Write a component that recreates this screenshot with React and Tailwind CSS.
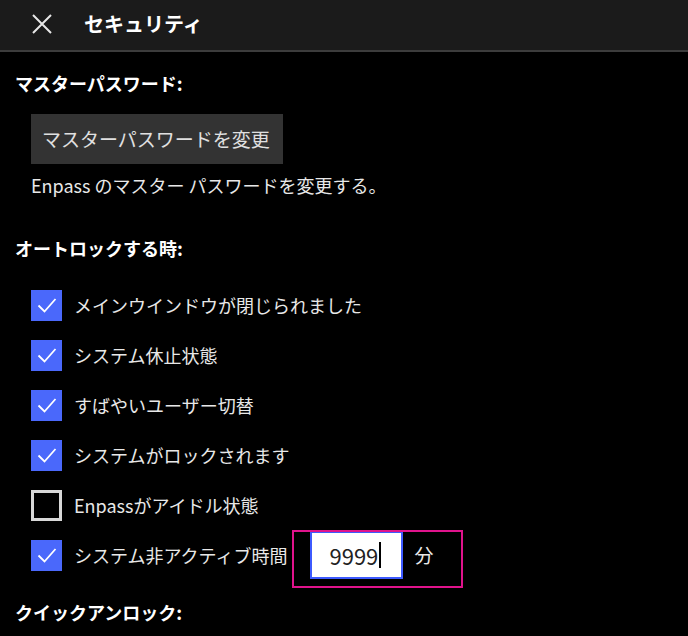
import React from 'react';

const FONT = { fontFamily: '"Noto Sans CJK JP", "Noto Sans", sans-serif' };

const Check = ({ checked }) => (
  checked ? (
    <div className="w-[31px] h-[31px] bg-[#4a68fb] flex items-center justify-center shrink-0">
      <svg width="22" height="22" viewBox="0 0 22 22" fill="none">
        <path d="M2.5 11.5 L8.5 17.5 L19.5 5" stroke="white" strokeWidth="1.8" />
      </svg>
    </div>
  ) : (
    <div className="w-[31px] h-[31px] border-[3px] border-[#d8d8d8] shrink-0" />
  )
);

const Row = ({ checked, children }) => (
  <div className="flex items-center h-[50px]">
    <Check checked={checked} />
    <span className="ml-[12px] text-[18px] text-[#e8e8e8]">{children}</span>
  </div>
);

export default function App() {
  return (
    <div className="w-[688px] h-[636px] bg-black overflow-hidden text-white" style={FONT}>
      <div className="h-[52px] bg-[#1b1b1b] border-b-[2px] border-[#3c3c3c] flex items-center">
        <svg className="ml-[31px] mb-[2px]" width="22" height="22" viewBox="0 0 22 22" fill="none">
          <path d="M2 2 L20 20 M20 2 L2 20" stroke="#e8e8e8" strokeWidth="2" />
        </svg>
        <span className="ml-[31px] mb-[2px] text-[20px] font-bold text-white">セキュリティ</span>
      </div>

      <div className="pl-[15px]">
        <div className="mt-[18px] text-[18px] font-bold leading-[26px]">マスターパスワード:</div>
        <div className="ml-[16px] mt-[18px]">
          <div className="w-[252px] h-[50px] bg-[#333333] flex items-center pl-[11px] text-[19px] text-[#e0e0e0]">
            マスターパスワードを変更
          </div>
          <div className="mt-[9px] text-[18px] text-[#e8e8e8] leading-[24px]">Enpass のマスター パスワードを変更する。</div>
        </div>

        <div className="mt-[38px] text-[18px] font-bold leading-[26px]">オートロックする時:</div>

        <div className="ml-[16px] mt-[19px]">
          <Row checked>メインウインドウが閉じられました</Row>
          <Row checked>システム休止状態</Row>
          <Row checked>すばやいユーザー切替</Row>
          <Row checked>システムがロックされます</Row>
          <Row checked={false}>Enpassがアイドル状態</Row>
          <div className="flex items-center h-[50px] relative">
            <Check checked />
            <span className="ml-[12px] text-[18px] text-[#e8e8e8]">システム非アクティブ時間</span>
            <div className="ml-[23px] w-[93px] h-[48px] bg-white border-[2px] border-[#3d5afe] flex items-center pl-[17px] text-[22px] text-[#222]">
              9999<span className="w-[2px] h-[26px] bg-black ml-[1px]" />
            </div>
            <span className="ml-[11px] text-[19px] text-[#e8e8e8]">分</span>
            <div className="absolute left-[261px] top-[0px] w-[171px] h-[58px] border-[2px] border-[#e0138c]" />
          </div>
        </div>

        <div className="mt-[19px] text-[18px] font-bold leading-[26px]">クイックアンロック:</div>
      </div>
    </div>
  );
}
